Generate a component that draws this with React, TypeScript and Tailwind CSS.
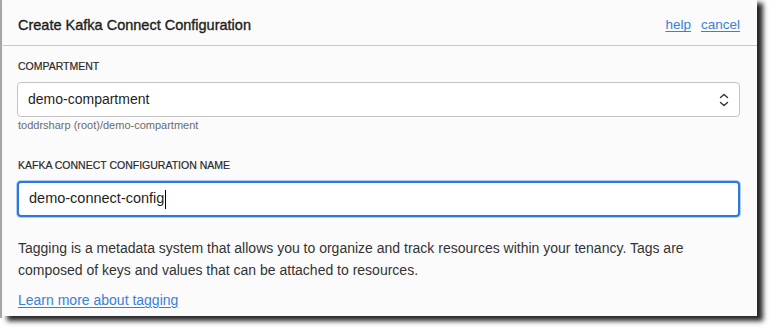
import React from 'react';

const font = { fontFamily: '"Liberation Sans", Arial, sans-serif' };

const App: React.FC = () => {
  return (
    <div className="w-[769px] h-[328px] bg-white flex overflow-hidden" style={font}>
      {/* left edge of the page behind */}
      <div className="w-[2px] h-[318px] bg-[#a8a8a8]" />
      <div className="ml-[1px] w-[754px] h-[316px] bg-[#fbfbfb] shadow-[5px_4px_5px_1px_rgba(0,0,0,0.85)] flex flex-col">
        {/* header */}
        <div className="h-[46px] border-b border-[#c9c9c9] flex items-center justify-between pl-[15px] pr-[17px] pt-[6px]">
          <h1 className="text-[14.5px] text-[#1d1d1d] [-webkit-text-stroke:0.35px_#1d1d1d]">Create Kafka Connect Configuration</h1>
          <div className="flex gap-[10px] text-[13.5px] text-[#3a7fd9]">
            <a className="underline underline-offset-2">help</a>
            <a className="underline underline-offset-2">cancel</a>
          </div>
        </div>

        {/* body */}
        <div className="pl-[14px] pr-[17px] flex flex-col">
          <label className="ml-[1px] pt-[13px] text-[10.5px] leading-[14px] text-[#2a2a2a] uppercase [-webkit-text-stroke:0.2px_#2a2a2a]">Compartment</label>
          <div className="mt-[9px] h-[35px] rounded-[4px] border border-[#c4c4c4] bg-white flex items-center justify-between pl-[10px] pr-[10px]">
            <span className="text-[14px] text-[#1f1f1f]">demo-compartment</span>
            <svg width="10" height="14" viewBox="0 0 10 14" fill="none" stroke="#333" strokeWidth="1.4" strokeLinecap="round" strokeLinejoin="round">
              <path d="M1.5 4.5 L5 1.5 L8.5 4.5" />
              <path d="M1.5 9.5 L5 12.5 L8.5 9.5" />
            </svg>
          </div>
          <p className="ml-[1px] mt-[1px] text-[11px] leading-[14px] text-[#6b6b6b]">toddrsharp (root)/demo-compartment</p>

          <label className="ml-[1px] mt-[26px] text-[10.5px] leading-[14px] text-[#2a2a2a] uppercase [-webkit-text-stroke:0.2px_#2a2a2a]">Kafka Connect Configuration Name</label>
          <div className="mt-[9px] h-[36px] rounded-[4px] border-2 border-[#2c78dc] bg-white flex items-center pl-[10px] shadow-[0_0_0_1px_rgba(44,120,220,0.35)]">
            <span className="text-[14.5px] text-[#1f1f1f]">demo-connect-config</span>
            <span className="ml-[1px] w-[1px] h-[19px] bg-black" />
          </div>

          <p className="ml-[1px] mt-[20px] text-[14px] leading-[22px] text-[#333]">
            Tagging is a metadata system that allows you to organize and track resources within your tenancy. Tags are composed of keys and values that can be attached to resources.
          </p>
          <a className="ml-[1px] mt-[8px] text-[14px] leading-[22px] text-[#3a7fd9] underline underline-offset-2 self-start">Learn more about tagging</a>
        </div>
      </div>
    </div>
  );
};

export default App;
